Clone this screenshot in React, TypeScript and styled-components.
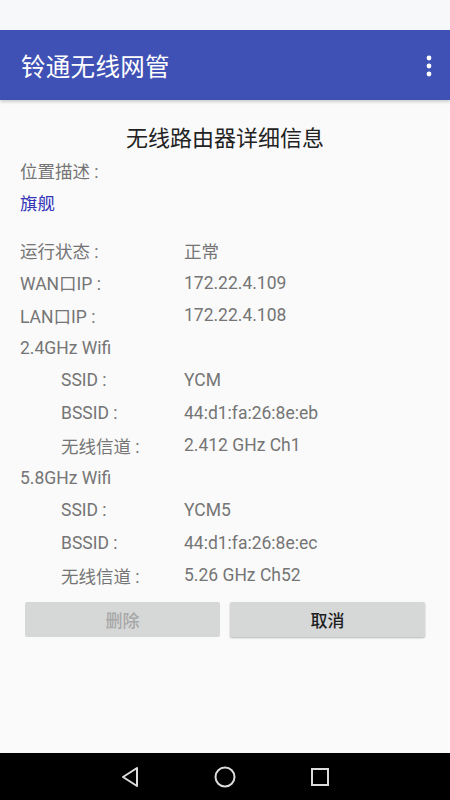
import styled, { createGlobalStyle } from 'styled-components'

const GlobalStyle = createGlobalStyle`
  html, body {
    margin: 0;
    padding: 0;
    background: #fafafa;
  }
  body {
    font-family: Roboto, "Noto Sans CJK SC", sans-serif;
  }
`

type Item = { label: string; value?: string; indent?: boolean }

const statusRows: Item[] = [
  { label: '运行状态 :', value: '正常' },
  { label: 'WAN口IP :', value: '172.22.4.109' },
  { label: 'LAN口IP :', value: '172.22.4.108' },
  { label: '2.4GHz Wifi' },
  { label: 'SSID :', value: 'YCM', indent: true },
  { label: 'BSSID :', value: '44:d1:fa:26:8e:eb', indent: true },
  { label: '无线信道 :', value: '2.412 GHz Ch1', indent: true },
  { label: '5.8GHz Wifi' },
  { label: 'SSID :', value: 'YCM5', indent: true },
  { label: 'BSSID :', value: '44:d1:fa:26:8e:ec', indent: true },
  { label: '无线信道 :', value: '5.26 GHz Ch52', indent: true },
]

export default function App() {
  return (
    <>
      <GlobalStyle />
      <Screen>
        <StatusBar />
        <AppBar>
          <Title>铃通无线网管</Title>
          <MenuButton aria-label="更多">
            <svg width="6" height="22" viewBox="0 0 6 22">
              <circle cx="3" cy="3" r="2.4" fill="#fff" />
              <circle cx="3" cy="11" r="2.4" fill="#fff" />
              <circle cx="3" cy="19" r="2.4" fill="#fff" />
            </svg>
          </MenuButton>
        </AppBar>

        <Content>
          <Heading>无线路由器详细信息</Heading>
          <Row>
            <Label>位置描述 :</Label>
          </Row>
          <Row>
            <Location>旗舰</Location>
          </Row>

          <Group>
            {statusRows.map((r, i) => (
              <Row key={i}>
                <Label $indent={r.indent} $wide={!r.value}>
                  {r.label}
                </Label>
                {r.value && <Value>{r.value}</Value>}
              </Row>
            ))}
          </Group>

          <Buttons>
            <Button disabled>删除</Button>
            <Button>取消</Button>
          </Buttons>
        </Content>

        <NavBar>
          <svg width="22" height="24" viewBox="0 0 22 24">
            <path d="M18 3 L4 12 L18 21 Z" fill="none" stroke="#dcdcdc" strokeWidth="2" strokeLinejoin="round" />
          </svg>
          <svg width="24" height="24" viewBox="0 0 24 24">
            <circle cx="12" cy="12" r="9.5" fill="none" stroke="#dcdcdc" strokeWidth="2" />
          </svg>
          <svg width="22" height="22" viewBox="0 0 22 22">
            <rect x="3" y="3" width="16" height="16" fill="none" stroke="#dcdcdc" strokeWidth="2" />
          </svg>
        </NavBar>
      </Screen>
    </>
  )
}

const Screen = styled.div`
  display: flex;
  flex-direction: column;
  width: 450px;
  height: 800px;
  background: #fafafa;
  overflow: hidden;
`

const StatusBar = styled.div`
  height: 30px;
  flex: none;
  background: #f7f8fa;
`

const AppBar = styled.header`
  height: 70px;
  flex: none;
  display: flex;
  align-items: center;
  justify-content: space-between;
  padding: 0 18px 0 21px;
  background: #3f51b5;
  box-shadow: 0 2px 3px rgba(0, 0, 0, 0.18);
  position: relative;
  z-index: 1;
`

const Title = styled.h1`
  margin: 0;
  color: #fff;
  font-size: 24.5px;
  font-weight: 400;
  letter-spacing: 0.3px;
`

const MenuButton = styled.button`
  border: none;
  background: none;
  padding: 0;
  display: flex;
  margin-top: 1px;
`

const Content = styled.main`
  flex: 1;
  padding: 24px 25px 0 20px;
`

const Heading = styled.h2`
  margin: 0 0 0 5px;
  height: 30px;
  line-height: 30px;
  text-align: center;
  font-size: 22px;
  font-weight: 400;
  color: #222;
`

const Group = styled.div`
  margin-top: 15px;
`

const Row = styled.div`
  display: flex;
  align-items: center;
  height: 32.5px;
  font-size: 17.5px;
  color: #757575;
`

const Label = styled.span<{ $indent?: boolean; $wide?: boolean }>`
  flex: none;
  width: ${(p) => (p.$wide ? 'auto' : p.$indent ? '123px' : '164px')};
  margin-left: ${(p) => (p.$indent ? '41px' : '0')};
  white-space: nowrap;
`

const Value = styled.span`
  white-space: nowrap;
`

const Location = styled.span`
  color: #3333b8;
`

const Buttons = styled.div`
  display: grid;
  grid-template-columns: 1fr 1fr;
  gap: 10px;
  margin: 10px 0 0 5px;
`

const Button = styled.button`
  height: 35px;
  border: none;
  border-radius: 2px;
  background: #d6d7d7;
  box-shadow: 0 1px 2px rgba(0, 0, 0, 0.28);
  font-family: Roboto, "Noto Sans CJK SC", sans-serif;
  font-size: 17px;
  font-weight: 500;
  color: #1f1f1f;

  &:disabled {
    color: #a8a8a8;
    box-shadow: none;
  }
`

const NavBar = styled.nav`
  height: 47px;
  flex: none;
  display: flex;
  align-items: center;
  justify-content: center;
  gap: 72px;
  background: #000;
`
